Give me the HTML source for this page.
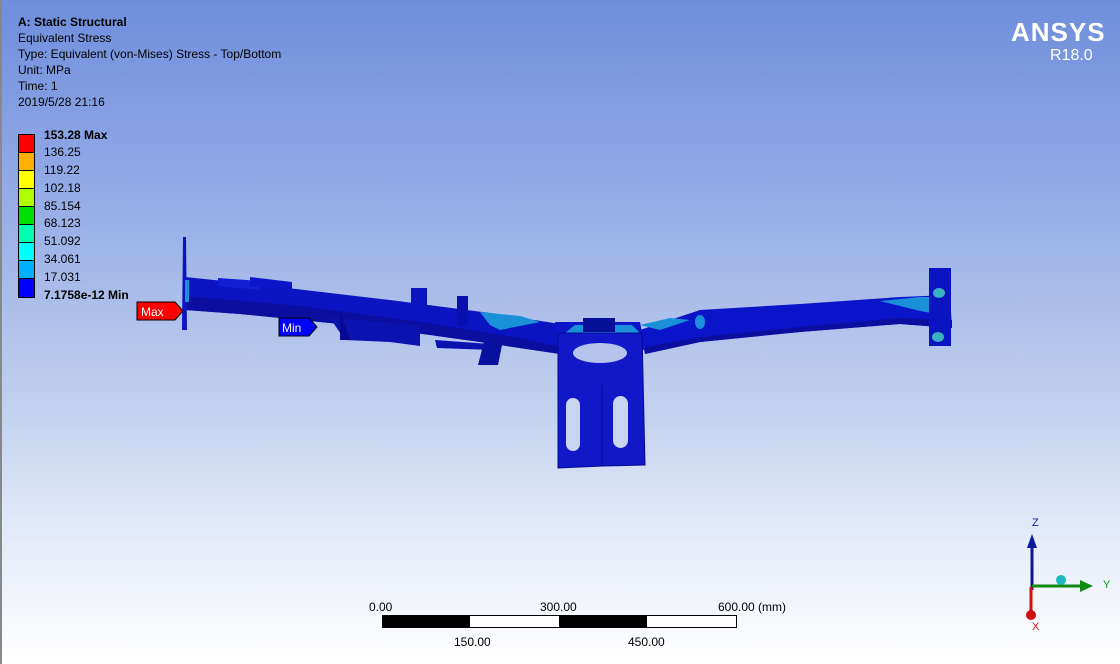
<!DOCTYPE html>
<html><head><meta charset="utf-8"><style>
html,body{margin:0;padding:0}
body{width:1120px;height:664px;position:relative;overflow:hidden;font-family:"Liberation Sans","Noto Sans CJK SC",sans-serif;
background:linear-gradient(to bottom,#6e8edc 0%,#95acE6 30%,#c0cfee 60%,#e6ecf8 82%,#ffffff 100%);}
.t{position:absolute;font-size:12px;color:#000;white-space:nowrap;line-height:16px}
.b{font-weight:bold}
</style></head><body>
<div style="position:absolute;left:0;top:0;width:2px;height:664px;background:#888"></div>
<div class="t b" style="left:18px;top:14px">A: Static Structural</div>
<div class="t" style="left:18px;top:30px">Equivalent Stress</div>
<div class="t" style="left:18px;top:46px">Type: Equivalent (von-Mises) Stress - Top/Bottom</div>
<div class="t" style="left:18px;top:62px">Unit: MPa</div>
<div class="t" style="left:18px;top:78px">Time: 1</div>
<div class="t" style="left:18px;top:94px">2019/5/28 21:16</div>

<div style="position:absolute;left:18px;top:134px;width:15px;height:162px;border:1px solid #000;background:linear-gradient(to bottom,#ff0000 0 11.1%,#ffb000 11.1% 22.2%,#ffff00 22.2% 33.3%,#b0ff00 33.3% 44.4%,#00e000 44.4% 55.5%,#00ffb0 55.5% 66.6%,#00ffff 66.6% 77.7%,#00b0ff 77.7% 88.8%,#0000ff 88.8%)"></div>
<svg style="position:absolute;left:18px;top:134px" width="17" height="164"><g stroke="#000" stroke-width="1">
<line x1="0" x2="17" y1="18.5" y2="18.5"/><line x1="0" x2="17" y1="36.5" y2="36.5"/><line x1="0" x2="17" y1="54.5" y2="54.5"/><line x1="0" x2="17" y1="72.5" y2="72.5"/><line x1="0" x2="17" y1="90.5" y2="90.5"/><line x1="0" x2="17" y1="108.5" y2="108.5"/><line x1="0" x2="17" y1="126.5" y2="126.5"/><line x1="0" x2="17" y1="144.5" y2="144.5"/></g></svg>
<div class="t b" style="left:44px;top:127px">153.28 Max</div>
<div class="t" style="left:44px;top:144px">136.25</div>
<div class="t" style="left:44px;top:162px">119.22</div>
<div class="t" style="left:44px;top:180px">102.18</div>
<div class="t" style="left:44px;top:198px">85.154</div>
<div class="t" style="left:44px;top:215px">68.123</div>
<div class="t" style="left:44px;top:233px">51.092</div>
<div class="t" style="left:44px;top:251px">34.061</div>
<div class="t" style="left:44px;top:269px">17.031</div>
<div class="t b" style="left:44px;top:287px">7.1758e-12 Min</div>

<div style="position:absolute;left:1011px;top:17px;color:#fff;font-size:26px;font-weight:bold;letter-spacing:1px">ANSYS</div>
<div style="position:absolute;left:1050px;top:47px;color:#fff;font-size:16px">R18.0</div>

<svg style="position:absolute;left:0;top:0" width="1120" height="664">
<polygon points="185,277 262,285 390,300 490,313 560,324 575,347 560,354 480,342 380,328 240,314 185,310" fill="#0a14c0"/>
<polygon points="185,296 300,306 420,322 520,338 560,347 560,354 480,342 380,328 240,314 185,310" fill="#0a0fa0"/>
<polygon points="218,278 260,281 260,290 218,286" fill="#1020d0"/>
<polygon points="250,277 292,282 292,290 250,286" fill="#0a16c8"/>
<polygon points="640,330 700,310 800,304 900,297 950,295 952,328 900,324 800,332 700,342 645,354" fill="#0a14c8"/>
<polygon points="645,347 700,337 800,327 900,318 952,320 952,328 900,324 800,332 700,342 645,354" fill="#0a0fa0"/>
<polygon points="880,301 920,297 950,297 948,316 920,311" fill="#1a90d8"/>
<ellipse cx="700" cy="322" rx="5" ry="7" fill="#1a90d8"/>
<polygon points="640,325 670,318 690,320 660,330" fill="#1a90d8"/>
<polygon points="555,322 640,322 645,350 560,350" fill="#0a14c8"/>
<polygon points="575,325 632,325 640,333 565,333" fill="#1a90d8"/>
<polygon points="480,312 520,316 540,322 500,330 490,325" fill="#1a90d8"/>
<rect x="583" y="318" width="32" height="14" fill="#08109a"/>
<polygon points="558,333 642,333 645,465 603,466 558,468" fill="#1018c8" stroke="#060a90" stroke-width="1"/>
<ellipse cx="600" cy="353" rx="27" ry="10" fill="#b4c4ec"/>
<rect x="566" y="398" width="14" height="53" rx="7" fill="#c8d4f0"/>
<rect x="613" y="396" width="15" height="52" rx="7.5" fill="#c8d4f0"/>
<line x1="602" y1="385" x2="602" y2="465" stroke="#080e9a" stroke-width="1.5"/>
<rect x="411" y="288" width="16" height="20" fill="#0a14c0"/>
<rect x="457" y="296" width="11" height="30" fill="#0810b0"/>
<polygon points="330,318 420,325 420,346 390,342 345,340" fill="#0a12b0"/>
<polygon points="340,310 350,340 340,340" fill="#060a90"/>
<polygon points="435,340 490,344 492,350 437,348" fill="#0a12b0"/>
<polygon points="485,338 503,340 498,365 478,365" fill="#0810a0"/>
<polygon points="183,237 186,237 187,330 182,330" fill="#0a14c0"/>
<rect x="185" y="280" width="4" height="22" fill="#1a90d8"/>
<rect x="929" y="268" width="22" height="78" fill="#0a14c0"/>
<ellipse cx="939" cy="293" rx="6" ry="5" fill="#3ab0c0"/>
<ellipse cx="938" cy="337" rx="6" ry="5" fill="#3ab0c0"/>
<polygon points="137,302 175,302 183,311 175,320 137,320" fill="#ff0000" stroke="#000" stroke-width="1"/>
<text x="141" y="316" font-family="Liberation Sans" font-size="12" fill="#fff">Max</text>
<polygon points="279,318 309,318 317,327 309,336 279,336" fill="#0000ff" stroke="#000" stroke-width="1"/>
<text x="282" y="332" font-family="Liberation Sans" font-size="12" fill="#fff">Min</text>
<rect x="382.5" y="615.5" width="354" height="12" fill="#fff" stroke="#000"/>
<rect x="382" y="615" width="88" height="13" fill="#000"/>
<rect x="559" y="615" width="88" height="13" fill="#000"/>
<line x1="1032" y1="545" x2="1032" y2="590" stroke="#0a1890" stroke-width="3"/>
<polygon points="1032,534 1027,548 1037,548" fill="#0a18a0"/>
<line x1="1032" y1="586" x2="1082" y2="586" stroke="#108a10" stroke-width="3"/>
<polygon points="1093,586 1080,580 1080,592" fill="#108a10"/>
<circle cx="1061" cy="580" r="5" fill="#20b8c0"/>
<line x1="1031" y1="587" x2="1031" y2="612" stroke="#d01010" stroke-width="3"/>
<ellipse cx="1031" cy="615" rx="5" ry="5" fill="#d01010"/>
<text x="1032" y="526" font-family="Liberation Sans" font-size="11" fill="#1020c0">Z</text>
<text x="1103" y="588" font-family="Liberation Sans" font-size="11" fill="#10a010">Y</text>
<text x="1032" y="630" font-family="Liberation Sans" font-size="11" fill="#d01010">X</text>
</svg>
<div class="t" style="left:369px;top:599px">0.00</div>
<div class="t" style="left:540px;top:599px">300.00</div>
<div class="t" style="left:718px;top:599px">600.00 (mm)</div>
<div class="t" style="left:454px;top:634px">150.00</div>
<div class="t" style="left:628px;top:634px">450.00</div>
</body></html>
